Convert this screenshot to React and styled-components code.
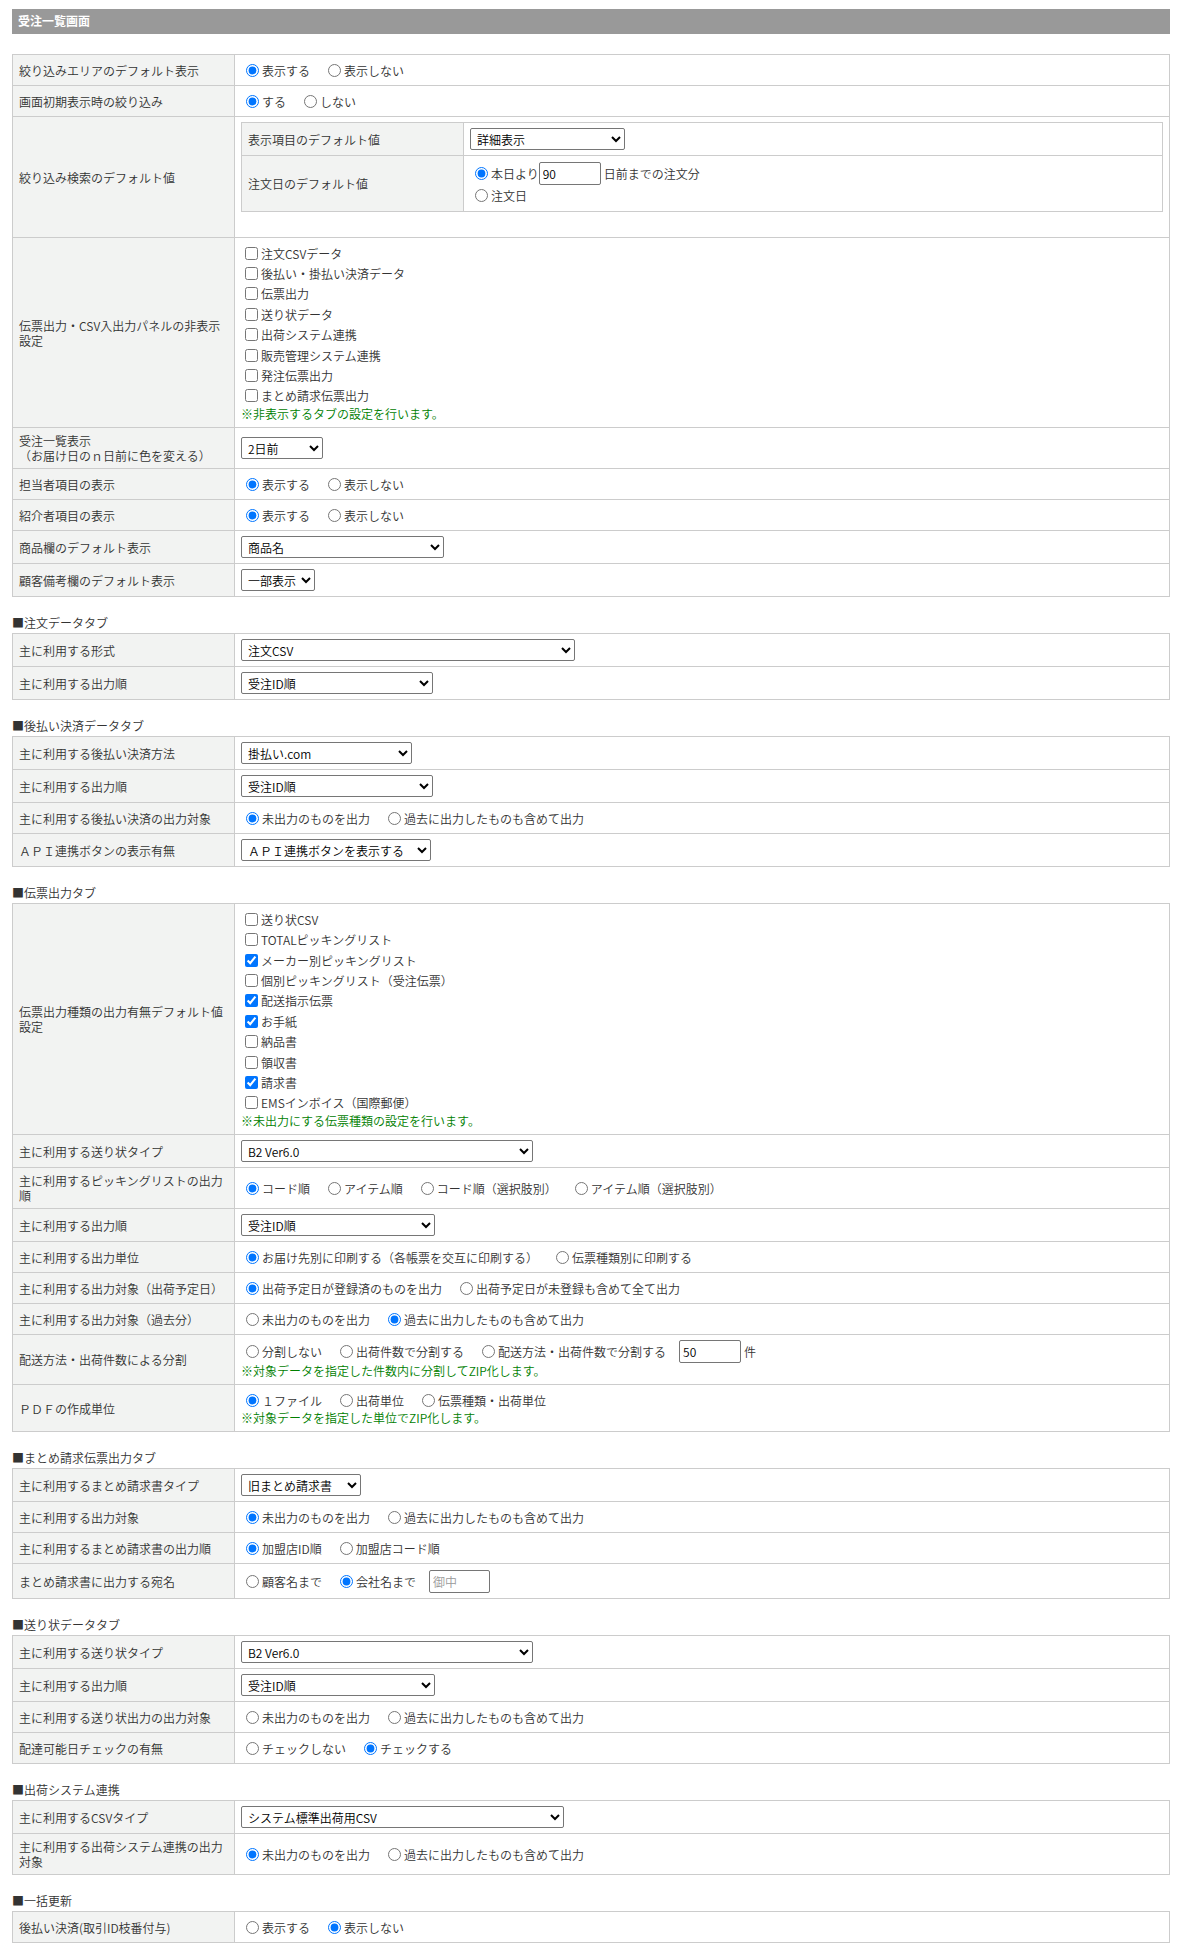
import React from 'react'
import styled, { createGlobalStyle } from 'styled-components'

const GlobalStyle = createGlobalStyle`
  body {
    margin: 0;
    background: #fff;
    font-family: "Noto Sans CJK JP", "Noto Sans", sans-serif;
    font-size: 12px;
    font-weight: 350;
    color: #333;
  }
`

const Page = styled.div`
  padding: 9px 12px 13px;
`

const TitleBar = styled.h1`
  margin: 0 0 20px;
  height: 25px;
  line-height: 24px;
  padding: 0 6px;
  background: #999;
  color: #fff;
  font-size: 12px;
  font-weight: bold;
`

const SectionTitle = styled.h2`
  margin: 0 0 2px;
  padding-top: 18px;
  height: 16px;
  line-height: 16px;
  font-size: 12px;
  font-weight: 350;
  color: #333;
`

const Table = styled.table`
  width: 100%;
  border-collapse: collapse;
  border: 1px solid #ccc;
  margin-bottom: ${p => (p.$nested ? '20px' : '0')};
`

const Label = styled.th`
  width: 209px;
  padding: 5px 6px;
  background: #f2f3f2;
  border: 1px solid #ccc;
  text-align: left;
  font-weight: 350;
  vertical-align: middle;
  line-height: 15px;
`

const Value = styled.td`
  padding: 5px 6px;
  border: 1px solid #ccc;
  vertical-align: middle;
  line-height: 15px;
`

const Line = styled.div`
  display: flex;
  align-items: center;
  min-height: ${p => p.$h || 20}px;
`

const Option = styled.label`
  display: inline-flex;
  align-items: center;
  margin-right: ${p => (p.$tight ? 0 : 13)}px;
  white-space: nowrap;
`

const Radio = styled.input.attrs({ type: 'radio' })`
  width: 13px;
  height: 13px;
  margin: 0 3px 0 5px;
`

const CheckItem = styled.label`
  display: flex;
  align-items: center;
  height: 20.4px;
`

const Check = styled.input.attrs({ type: 'checkbox' })`
  width: 13px;
  height: 13px;
  margin: 0 3px 0 4px;
`

const Note = styled.div`
  color: #008000;
  line-height: 16px;
`

const Select = styled.select`
  display: block;
  width: ${p => p.$w}px;
  height: 22px;
  padding: 0 2px;
  font-family: inherit;
  font-size: 12px;
  font-weight: 350;
  color: #000;
  background: #fff;
  border: 1px solid #767676;
  border-radius: 2px;
`

const TextInput = styled.input`
  box-sizing: border-box;
  width: ${p => p.$w || 62}px;
  height: 23px;
  padding: 0 3px;
  font-family: inherit;
  font-size: 12px;
  font-weight: 350;
  color: #000;
  border: 1px solid #767676;
  border-radius: 2px;

  &::placeholder {
    color: #999;
  }
`

const Unit = styled.span`
  margin-left: 3px;
`

const Radios = ({ name, options, checked }) => (
  <Line>
    {options.map((o, i) => (
      <Option key={o}>
        <Radio name={name} defaultChecked={i === checked} />
        {o}
      </Option>
    ))}
  </Line>
)

const Checks = ({ items, checked = [] }) => (
  <>
    {items.map((t, i) => (
      <CheckItem key={t}>
        <Check defaultChecked={checked.includes(i)} />
        {t}
      </CheckItem>
    ))}
  </>
)

const Sel = ({ w, value }) => (
  <Select $w={w} defaultValue={value}>
    <option>{value}</option>
  </Select>
)

const OUT = ['未出力のものを出力', '過去に出力したものも含めて出力']
const SHOW = ['表示する', '表示しない']

export default function App() {
  return (
    <Page>
      <GlobalStyle />
      <TitleBar>受注一覧画面</TitleBar>

      <Table>
        <tbody>
          <tr>
            <Label>絞り込みエリアのデフォルト表示</Label>
            <Value><Radios name="area" options={SHOW} checked={0} /></Value>
          </tr>
          <tr>
            <Label>画面初期表示時の絞り込み</Label>
            <Value><Radios name="init" options={['する', 'しない']} checked={0} /></Value>
          </tr>
          <tr>
            <Label>絞り込み検索のデフォルト値</Label>
            <Value>
              <Table $nested>
                <tbody>
                  <tr>
                    <Label>表示項目のデフォルト値</Label>
                    <Value><Sel w={155} value="詳細表示" /></Value>
                  </tr>
                  <tr>
                    <Label>注文日のデフォルト値</Label>
                    <Value>
                      <Line $h={24}>
                        <Option $tight>
                          <Radio name="orderdate" defaultChecked />
                          本日より
                        </Option>
                        <TextInput defaultValue="90" />
                        <Unit>日前までの注文分</Unit>
                      </Line>
                      <Line $h={21}>
                        <Option>
                          <Radio name="orderdate" />
                          注文日
                        </Option>
                      </Line>
                    </Value>
                  </tr>
                </tbody>
              </Table>
            </Value>
          </tr>
          <tr>
            <Label>伝票出力・CSV入出力パネルの非表示設定</Label>
            <Value>
              <Checks
                items={[
                  '注文CSVデータ',
                  '後払い・掛払い決済データ',
                  '伝票出力',
                  '送り状データ',
                  '出荷システム連携',
                  '販売管理システム連携',
                  '発注伝票出力',
                  'まとめ請求伝票出力',
                ]}
              />
              <Note>※非表示するタブの設定を行います。</Note>
            </Value>
          </tr>
          <tr>
            <Label>
              受注一覧表示
              <br />
              （お届け日のｎ日前に色を変える）
            </Label>
            <Value><Sel w={82} value="2日前" /></Value>
          </tr>
          <tr>
            <Label>担当者項目の表示</Label>
            <Value><Radios name="staff" options={SHOW} checked={0} /></Value>
          </tr>
          <tr>
            <Label>紹介者項目の表示</Label>
            <Value><Radios name="intro" options={SHOW} checked={0} /></Value>
          </tr>
          <tr>
            <Label>商品欄のデフォルト表示</Label>
            <Value><Sel w={203} value="商品名" /></Value>
          </tr>
          <tr>
            <Label>顧客備考欄のデフォルト表示</Label>
            <Value><Sel w={74} value="一部表示" /></Value>
          </tr>
        </tbody>
      </Table>

      <SectionTitle>■注文データタブ</SectionTitle>
      <Table>
        <tbody>
          <tr>
            <Label>主に利用する形式</Label>
            <Value><Sel w={334} value="注文CSV" /></Value>
          </tr>
          <tr>
            <Label>主に利用する出力順</Label>
            <Value><Sel w={192} value="受注ID順" /></Value>
          </tr>
        </tbody>
      </Table>

      <SectionTitle>■後払い決済データタブ</SectionTitle>
      <Table>
        <tbody>
          <tr>
            <Label>主に利用する後払い決済方法</Label>
            <Value><Sel w={171} value="掛払い.com" /></Value>
          </tr>
          <tr>
            <Label>主に利用する出力順</Label>
            <Value><Sel w={192} value="受注ID順" /></Value>
          </tr>
          <tr>
            <Label>主に利用する後払い決済の出力対象</Label>
            <Value><Radios name="atobarai" options={OUT} checked={0} /></Value>
          </tr>
          <tr>
            <Label>ＡＰＩ連携ボタンの表示有無</Label>
            <Value><Sel w={190} value="ＡＰＩ連携ボタンを表示する" /></Value>
          </tr>
        </tbody>
      </Table>

      <SectionTitle>■伝票出力タブ</SectionTitle>
      <Table>
        <tbody>
          <tr>
            <Label>伝票出力種類の出力有無デフォルト値設定</Label>
            <Value>
              <Checks
                items={[
                  '送り状CSV',
                  'TOTALピッキングリスト',
                  'メーカー別ピッキングリスト',
                  '個別ピッキングリスト（受注伝票）',
                  '配送指示伝票',
                  'お手紙',
                  '納品書',
                  '領収書',
                  '請求書',
                  'EMSインボイス（国際郵便）',
                ]}
                checked={[2, 4, 5, 8]}
              />
              <Note>※未出力にする伝票種類の設定を行います。</Note>
            </Value>
          </tr>
          <tr>
            <Label>主に利用する送り状タイプ</Label>
            <Value><Sel w={292} value="B2 Ver6.0" /></Value>
          </tr>
          <tr>
            <Label>主に利用するピッキングリストの出力順</Label>
            <Value>
              <Radios
                name="picking"
                options={['コード順', 'アイテム順', 'コード順（選択肢別）', 'アイテム順（選択肢別）']}
                checked={0}
              />
            </Value>
          </tr>
          <tr>
            <Label>主に利用する出力順</Label>
            <Value><Sel w={194} value="受注ID順" /></Value>
          </tr>
          <tr>
            <Label>主に利用する出力単位</Label>
            <Value>
              <Radios
                name="unit"
                options={['お届け先別に印刷する（各帳票を交互に印刷する）', '伝票種類別に印刷する']}
                checked={0}
              />
            </Value>
          </tr>
          <tr>
            <Label>主に利用する出力対象（出荷予定日）</Label>
            <Value>
              <Radios
                name="shipdate"
                options={['出荷予定日が登録済のものを出力', '出荷予定日が未登録も含めて全て出力']}
                checked={0}
              />
            </Value>
          </tr>
          <tr>
            <Label>主に利用する出力対象（過去分）</Label>
            <Value><Radios name="past" options={OUT} checked={1} /></Value>
          </tr>
          <tr>
            <Label>配送方法・出荷件数による分割</Label>
            <Value>
              <Line $h={23}>
                {['分割しない', '出荷件数で分割する', '配送方法・出荷件数で分割する'].map(o => (
                  <Option key={o}>
                    <Radio name="split" />
                    {o}
                  </Option>
                ))}
                <TextInput defaultValue="50" />
                <Unit>件</Unit>
              </Line>
              <Note>※対象データを指定した件数内に分割してZIP化します。</Note>
            </Value>
          </tr>
          <tr>
            <Label>ＰＤＦの作成単位</Label>
            <Value>
              <Radios name="pdf" options={['１ファイル', '出荷単位', '伝票種類・出荷単位']} checked={0} />
              <Note>※対象データを指定した単位でZIP化します。</Note>
            </Value>
          </tr>
        </tbody>
      </Table>

      <SectionTitle>■まとめ請求伝票出力タブ</SectionTitle>
      <Table>
        <tbody>
          <tr>
            <Label>主に利用するまとめ請求書タイプ</Label>
            <Value><Sel w={120} value="旧まとめ請求書" /></Value>
          </tr>
          <tr>
            <Label>主に利用する出力対象</Label>
            <Value><Radios name="matome" options={OUT} checked={0} /></Value>
          </tr>
          <tr>
            <Label>主に利用するまとめ請求書の出力順</Label>
            <Value><Radios name="matomeorder" options={['加盟店ID順', '加盟店コード順']} checked={0} /></Value>
          </tr>
          <tr>
            <Label>まとめ請求書に出力する宛名</Label>
            <Value>
              <Line $h={24}>
                <Option>
                  <Radio name="atena" />
                  顧客名まで
                </Option>
                <Option>
                  <Radio name="atena" defaultChecked />
                  会社名まで
                </Option>
                <TextInput placeholder="御中" $w={61} />
              </Line>
            </Value>
          </tr>
        </tbody>
      </Table>

      <SectionTitle>■送り状データタブ</SectionTitle>
      <Table>
        <tbody>
          <tr>
            <Label>主に利用する送り状タイプ</Label>
            <Value><Sel w={292} value="B2 Ver6.0" /></Value>
          </tr>
          <tr>
            <Label>主に利用する出力順</Label>
            <Value><Sel w={194} value="受注ID順" /></Value>
          </tr>
          <tr>
            <Label>主に利用する送り状出力の出力対象</Label>
            <Value><Radios name="okurijo" options={OUT} checked={-1} /></Value>
          </tr>
          <tr>
            <Label>配達可能日チェックの有無</Label>
            <Value><Radios name="deliv" options={['チェックしない', 'チェックする']} checked={1} /></Value>
          </tr>
        </tbody>
      </Table>

      <SectionTitle>■出荷システム連携</SectionTitle>
      <Table>
        <tbody>
          <tr>
            <Label>主に利用するCSVタイプ</Label>
            <Value><Sel w={323} value="システム標準出荷用CSV" /></Value>
          </tr>
          <tr>
            <Label>主に利用する出荷システム連携の出力対象</Label>
            <Value><Radios name="shukka" options={OUT} checked={0} /></Value>
          </tr>
        </tbody>
      </Table>

      <SectionTitle>■一括更新</SectionTitle>
      <Table>
        <tbody>
          <tr>
            <Label>後払い決済(取引ID枝番付与)</Label>
            <Value><Radios name="bulk" options={SHOW} checked={1} /></Value>
          </tr>
        </tbody>
      </Table>
    </Page>
  )
}
